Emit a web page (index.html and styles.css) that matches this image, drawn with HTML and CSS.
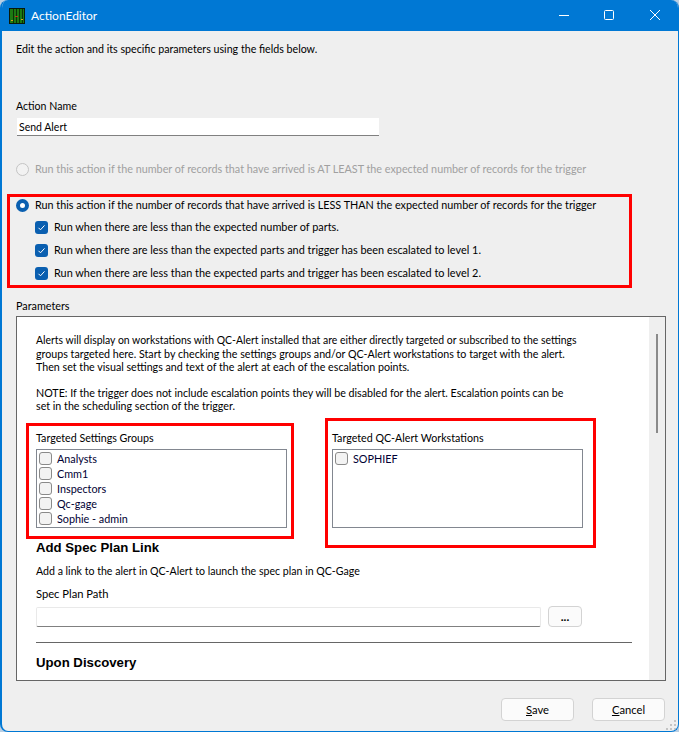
FILE: index.html
```html
<!DOCTYPE html>
<html lang="en">
<head>
<meta charset="utf-8">
<title>ActionEditor</title>
<link rel="stylesheet" href="styles.css">
</head>
<body>
<div class="window">
  <header class="titlebar">
    <svg class="app-icon" width="16" height="16" viewBox="0 0 16 16">
      <rect width="16" height="16" fill="#0a1a0a"/>
      <rect x="1" y="1" width="14" height="14" fill="#1d7a12"/>
      <path d="M4.5 1v14M7.5 1v14M10.5 1v14M13.5 1v14" stroke="#0c3308" stroke-width="1"/>
      <rect x="2" y="12" width="2" height="1" fill="#d8a020"/>
      <rect x="6" y="8" width="3" height="1" fill="#c8301a"/>
      <rect x="12" y="11" width="2" height="1" fill="#d8a020"/>
    </svg>
    <span class="title">ActionEditor</span>
    <div class="window-controls">
      <svg width="46" height="31" viewBox="0 0 46 31"><path d="M18 15.5h10" stroke="#fff" fill="none"/></svg>
      <svg width="46" height="31" viewBox="0 0 46 31"><rect x="17.5" y="10.5" width="9" height="9" rx="1" stroke="#fff" fill="none"/></svg>
      <svg width="46" height="31" viewBox="0 0 46 31"><path d="M17 10l10 10M27 10l-10 10" stroke="#fff" fill="none"/></svg>
    </div>
  </header>

  <main class="content">
    <div class="line intro">Edit the action and its specific parameters using the fields below.</div>
    <div class="line name-label">Action Name</div>
    <div class="name-input">Send Alert</div>

    <label class="line option disabled"><span class="radio"></span>Run this action if the number of records that have arrived is AT LEAST the expected number of records for the trigger</label>

    <section class="less-group">
      <label class="line option"><span class="radio on"></span>Run this action if the number of records that have arrived is LESS THAN the expected number of records for the trigger</label>
      <label class="line suboption"><span class="check on"><svg width="13" height="13" viewBox="0 0 13 13"><path d="M3.5 6.8l2 2 4-4.4" stroke="#fff" fill="none"/></svg></span>Run when there are less than the expected number of parts.</label>
      <label class="line suboption"><span class="check on"><svg width="13" height="13" viewBox="0 0 13 13"><path d="M3.5 6.8l2 2 4-4.4" stroke="#fff" fill="none"/></svg></span>Run when there are less than the expected parts and trigger has been escalated to level 1.</label>
      <label class="line suboption"><span class="check on"><svg width="13" height="13" viewBox="0 0 13 13"><path d="M3.5 6.8l2 2 4-4.4" stroke="#fff" fill="none"/></svg></span>Run when there are less than the expected parts and trigger has been escalated to level 2.</label>
    </section>

    <div class="line params-label">Parameters</div>
    <section class="panel">
      <div class="panel-body">
        <p class="help"><span class="help-tight">Alerts will display on workstations with QC-Alert installed that are either directly targeted or subscribed to the settings</span><br>groups targeted here. Start by checking the settings groups and/or QC-Alert workstations to target with the alert.<br>Then set the visual settings and text of the alert at each of the escalation points.</p>
        <p class="help note">NOTE: If the trigger does not include escalation points they will be disabled for the alert. Escalation points can be<br>set in the scheduling section of the trigger.</p>

        <div class="targets">
          <div class="target-box groups">
            <div class="line">Targeted Settings Groups</div>
            <ul class="checklist">
              <li><span class="check"></span>Analysts</li>
              <li><span class="check"></span>Cmm1</li>
              <li><span class="check"></span>Inspectors</li>
              <li><span class="check"></span>Qc-gage</li>
              <li><span class="check"></span>Sophie - admin</li>
            </ul>
          </div>
          <div class="target-box stations">
            <div class="line">Targeted QC-Alert Workstations</div>
            <ul class="checklist">
              <li><span class="check"></span>SOPHIEF</li>
            </ul>
          </div>
        </div>

        <h2 class="heading spec-heading">Add Spec Plan Link</h2>
        <div class="line spec-desc">Add a link to the alert in QC-Alert to launch the spec plan in QC-Gage</div>
        <div class="line spec-label">Spec Plan Path</div>
        <div class="spec-row">
          <div class="spec-input"></div>
          <button class="btn browse" type="button">...</button>
        </div>
        <hr class="rule">
        <h2 class="heading discovery">Upon Discovery</h2>
      </div>
      <div class="scrollbar"><div class="thumb"></div></div>
    </section>

    <footer class="actions">
      <button class="btn action" type="button"><u>S</u>ave</button>
      <button class="btn action" type="button"><u>C</u>ancel</button>
    </footer>
  </main>
  <svg class="grip" width="11" height="11" viewBox="0 0 11 11"><path d="M8 0h2v2H8zM4 4h2v2H4zM8 4h2v2H8zM0 8h2v2H0zM4 8h2v2H4zM8 8h2v2H8z" fill="#c4c4c4"/></svg>
</div>
</body>
</html>
```

FILE: styles.css
```css
* { box-sizing: border-box; }
html, body { margin: 0; height: 100%; overflow: hidden; background: #b9cfe4; }
body { font: 10.8px/16px Lato, "Liberation Sans", sans-serif; color: #000; }
.window {
  position: relative;
  width: 679px; height: 732px;
  background: #efefef;
  border-radius: 8px 8px 8px 8px;
  border: solid #0078d4;
  border-width: 0 1px 1px 2px;
  overflow: hidden;
  display: flex; flex-direction: column;
}
.titlebar {
  flex: none; height: 31px;
  margin-left: -2px; margin-right: -1px;
  background: #0078d4; color: #fff;
  display: flex; align-items: center;
  padding-left: 9px;
}
.app-icon { flex: none; margin-right: 6px; }
.title { font-size: 12px; }
.window-controls { margin-left: auto; display: flex; }
.window-controls svg { display: block; }
.content { padding: 10px 0 0 14px; display: flex; flex-direction: column; align-items: flex-start; }
.line { display: flex; align-items: center; height: 16px; white-space: nowrap; }
.intro { font-size: 10.67px; }
.name-label { margin-top: 41px; font-size: 10.6px; }
.name-input {
  margin: 4px 0 0 1px; width: 362px; height: 18px;
  background: #fff; border-bottom: 1px solid #808080;
  padding-left: 2px; line-height: 18px; font-size: 10.5px;
}
.option { gap: 6px; }
.disabled { margin-top: 25px; color: #a0a0a0; }
.radio {
  flex: none; width: 13px; height: 13px; border-radius: 50%;
  border: 1px solid #c4c4c4; background: #f2f2f2;
}
.radio.on { border: 4px solid #0a5fb0; background: #fff; }
.less-group {
  margin: 17px 0 0 -9px; width: 625px; height: 94px;
  border: 3px solid #f00; padding-left: 6px;
  display: flex; flex-direction: column;
}
.suboption { gap: 6px; margin: 6px 0 0 19px; font-size: 10.9px; }
.suboption:nth-child(n+3) { margin-top: 7px; }
.check {
  flex: none; display: block; width: 13px; height: 13px;
  border: 1px solid #8a8a8a; border-radius: 3px; background: #f3f3f3;
}
.check.on { border: 0; background: #0a5fb0; }
.check svg { display: block; }
.params-label { margin-top: 10px; }
.panel {
  margin-top: 2px; width: 650px; height: 365px;
  border: 1px solid #666; background: #fff;
  display: flex; overflow: hidden;
}
.panel-body { flex: 1; min-width: 0; padding: 17px 0 0 19px; }
.help { margin: 0; line-height: 13px; white-space: nowrap; font-size: 10.7px; }
.help-tight { display: inline-block; vertical-align: top; font-size: 10.45px; line-height: 13px; }
.note { margin-top: 13px; }
.targets { display: flex; gap: 31px; margin: 6px 0 0 -10px; height: 122px; align-items: flex-start; }
.target-box { border: 3px solid #f00; flex: none; }
.target-box .line { font-size: 10.7px; }
.groups { margin-top: 5px; width: 268px; height: 116px; padding: 4px 0 0 7px; }
.stations { width: 271px; height: 130px; padding: 9px 0 0 4px; }
.checklist {
  list-style: none; margin: 3px 0 0; padding: 1px 0 0 2px;
  width: 251px; height: 79px;
  border: 1px solid #828790; background: #fff; color: #000033;
}
.checklist li { display: flex; align-items: center; gap: 5px; height: 15px; }
.heading { margin: 0; font: bold 13.2px/16px "Liberation Sans", sans-serif; color: #000; }
.spec-desc { margin-top: 7px; font-size: 10.6px; }
.spec-label { margin-top: 7px; font-size: 11.2px; }
.spec-row { display: flex; gap: 7px; align-items: flex-start; margin-top: 4px; }
.spec-input {
  width: 505px; height: 20px; margin-top: 1px;
  background: #fff; border: 1px solid #e9e9e9; border-bottom: 1px solid #808080; border-radius: 2px;
}
.btn {
  font: inherit; color: #000; background: #fbfbfb;
  border: 1px solid #d3d3d3; border-radius: 4px; padding: 0;
}
.browse { width: 34px; height: 21px; font-size: 12px; font-weight: bold; line-height: 16px; }
.rule { margin: 15px 0 0; width: 596px; border: 0; border-top: 1px solid #666; height: 0; }
.discovery { margin-top: 12px; }
.scrollbar { flex: none; width: 16px; background: #efefef; }
.thumb { margin: 17px 0 0 7px; width: 2px; height: 99px; background: #8a8a8a; }
.actions { display: flex; gap: 18px; margin: 17px 0 0 485px; }
.action { width: 73px; height: 23px; font-size: 11.2px; }
.grip { position: absolute; right: 1px; bottom: 0; }
```
